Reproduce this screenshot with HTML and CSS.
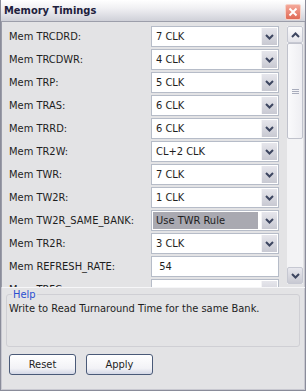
FILE: index.html
```html
<!DOCTYPE html>
<html lang="en">
<head>
    <meta charset="UTF-8">
    <title>Memory Timings</title>
    <link rel="stylesheet" href="styles.css">
</head>
<body>
    <div class="window">
        <div class="titlebar">
            <span class="title">Memory Timings</span>
            <span class="close">
                <svg width="10" height="10" viewBox="0 0 10 10"><path d="M1.5 1.5 L8.5 8.5 M8.5 1.5 L1.5 8.5" stroke="#fff" stroke-width="2"/></svg>
            </span>
        </div>

        <div class="scroller">
            <div class="rows">
                <div class="row"><label>Mem TRCDRD:</label><div class="combo"><span class="value">7 CLK</span><span class="arrow"><svg width="9" height="6" viewBox="0 0 9 6"><path d="M1 1 L4.5 4.5 L8 1" fill="none" stroke="#3d4660" stroke-width="2"/></svg></span></div></div>
                <div class="row"><label>Mem TRCDWR:</label><div class="combo"><span class="value">4 CLK</span><span class="arrow"><svg width="9" height="6" viewBox="0 0 9 6"><path d="M1 1 L4.5 4.5 L8 1" fill="none" stroke="#3d4660" stroke-width="2"/></svg></span></div></div>
                <div class="row"><label>Mem TRP:</label><div class="combo"><span class="value">5 CLK</span><span class="arrow"><svg width="9" height="6" viewBox="0 0 9 6"><path d="M1 1 L4.5 4.5 L8 1" fill="none" stroke="#3d4660" stroke-width="2"/></svg></span></div></div>
                <div class="row"><label>Mem TRAS:</label><div class="combo"><span class="value">6 CLK</span><span class="arrow"><svg width="9" height="6" viewBox="0 0 9 6"><path d="M1 1 L4.5 4.5 L8 1" fill="none" stroke="#3d4660" stroke-width="2"/></svg></span></div></div>
                <div class="row"><label>Mem TRRD:</label><div class="combo"><span class="value">6 CLK</span><span class="arrow"><svg width="9" height="6" viewBox="0 0 9 6"><path d="M1 1 L4.5 4.5 L8 1" fill="none" stroke="#3d4660" stroke-width="2"/></svg></span></div></div>
                <div class="row"><label>Mem TR2W:</label><div class="combo"><span class="value">CL+2 CLK</span><span class="arrow"><svg width="9" height="6" viewBox="0 0 9 6"><path d="M1 1 L4.5 4.5 L8 1" fill="none" stroke="#3d4660" stroke-width="2"/></svg></span></div></div>
                <div class="row"><label>Mem TWR:</label><div class="combo"><span class="value">7 CLK</span><span class="arrow"><svg width="9" height="6" viewBox="0 0 9 6"><path d="M1 1 L4.5 4.5 L8 1" fill="none" stroke="#3d4660" stroke-width="2"/></svg></span></div></div>
                <div class="row"><label>Mem TW2R:</label><div class="combo"><span class="value">1 CLK</span><span class="arrow"><svg width="9" height="6" viewBox="0 0 9 6"><path d="M1 1 L4.5 4.5 L8 1" fill="none" stroke="#3d4660" stroke-width="2"/></svg></span></div></div>
                <div class="row"><label>Mem TW2R_SAME_BANK:</label><div class="combo"><span class="value selected">Use TWR Rule</span><span class="arrow"><svg width="9" height="6" viewBox="0 0 9 6"><path d="M1 1 L4.5 4.5 L8 1" fill="none" stroke="#3d4660" stroke-width="2"/></svg></span></div></div>
                <div class="row"><label>Mem TR2R:</label><div class="combo"><span class="value">3 CLK</span><span class="arrow"><svg width="9" height="6" viewBox="0 0 9 6"><path d="M1 1 L4.5 4.5 L8 1" fill="none" stroke="#3d4660" stroke-width="2"/></svg></span></div></div>
                <div class="row"><label>Mem REFRESH_RATE:</label><div class="combo text"><span class="value">&nbsp;54</span></div></div>
                <div class="row"><label>Mem TRFC:</label><div class="combo"><span class="value">&nbsp;</span><span class="arrow"></span></div></div>
            </div>

            <div class="scrollbar">
                <span class="sb-btn"><svg width="9" height="6" viewBox="0 0 9 6"><path d="M1 5 L4.5 1.5 L8 5" fill="none" stroke="#3d4660" stroke-width="2"/></svg></span>
                <div class="track">
                    <div class="thumb">
                        <svg width="7" height="7" viewBox="0 0 7 7"><path d="M0 1.5 H7 M0 3.5 H7 M0 5.5 H7" stroke="#a8acbc" stroke-width="1"/></svg>
                    </div>
                </div>
                <span class="sb-btn down"><svg width="9" height="6" viewBox="0 0 9 6"><path d="M1 1 L4.5 4.5 L8 1" fill="none" stroke="#3d4660" stroke-width="2"/></svg></span>
            </div>
        </div>

        <fieldset class="help">
            <legend>Help</legend>
            <p>Write to Read Turnaround Time for the same Bank.</p>
        </fieldset>

        <div class="buttons">
            <button>Reset</button>
            <button>Apply</button>
        </div>
    </div>
</body>
</html>
```

FILE: styles.css
```css
body {
    margin: 0;
    font-family: "DejaVu Sans Condensed", "DejaVu Sans", sans-serif;
    font-stretch: condensed;
    font-size: 11px;
    color: #1e1e1e;
}

.window {
    width: 306px;
    height: 391px;
    box-sizing: border-box;
    background-color: #e3e3e5;
    border: 1px solid #8a8c9a;
    border-top: none;
    box-shadow: inset 1px 0 0 #c8c8d0, inset -1px 0 0 #c8c8d0, inset 0 -1px 0 #c8c8d0;
    overflow: hidden;
}

.titlebar {
    height: 21px;
    display: flex;
    align-items: center;
    justify-content: space-between;
    padding: 0 4px 0 3px;
    background: linear-gradient(#ffffff, #f0f0f3 40%, #cfd0d8);
    border-bottom: 1px solid #9c9eaa;
}

.title {
    font-weight: bold;
    color: #20203c;
}

.close {
    width: 14px;
    height: 14px;
    display: flex;
    align-items: center;
    justify-content: center;
    background: linear-gradient(#f4a89a, #e06a56);
    border: 1px solid #f7d2c8;
    border-radius: 2px;
    margin-top: 2px;
}

.scroller {
    display: flex;
    height: 265px;
    border-left: 1px solid #9a9ca8;
    border-bottom: 1px solid #f6f6f8;
    overflow: hidden;
}

.rows {
    flex: 1;
    padding: 4px 0 0 7px;
}

.row {
    display: flex;
    align-items: center;
    height: 21px;
    margin-bottom: 2px;
}

.row label {
    width: 142px;
}

.combo {
    width: 126px;
    height: 19px;
    display: flex;
    align-items: center;
    background-color: #fff;
    border: 1px solid #b6bcc8;
}

.combo .value {
    flex: 1;
    height: 17px;
    line-height: 17px;
    padding-left: 3px;
    margin-left: 1px;
}

.combo .value.selected {
    background-color: #a9a9b1;
    margin-right: 3px;
}

.arrow {
    width: 15px;
    height: 17px;
    display: flex;
    align-items: center;
    justify-content: center;
    background: linear-gradient(#e6e6ec, #c8c9d2);
    border-left: 1px solid #f4f4f6;
    margin-right: 1px;
}

.scrollbar {
    width: 16px;
    margin: 4px 2px 0 3px;
    height: 258px;
    display: flex;
    flex-direction: column;
    background-color: #f3f3f5;
}

.sb-btn {
    height: 15px;
    display: flex;
    align-items: center;
    justify-content: center;
    background: linear-gradient(#fbfbfc, #e4e4ea);
    border: 1px solid #c6c8d2;
    border-radius: 2px;
}

.sb-btn.down {
    background: linear-gradient(#e8e8ee, #c8c9d2);
}

.track {
    flex: 1;
}

.thumb {
    height: 96px;
    display: flex;
    align-items: center;
    justify-content: center;
    background: linear-gradient(90deg, #fafafc, #eeeef2);
    border: 1px solid #c0c2cc;
    border-radius: 2px;
    box-sizing: border-box;
}

.help {
    margin: 0 5px;
    padding: 0 2px 31px;
    border: 1px solid #cfcfd4;
    border-radius: 3px;
    min-width: 0;
}

.help legend {
    color: #2a4fd0;
    padding: 0 1px;
    margin-left: 3px;
    line-height: 13px;
}

.help p {
    margin: 1px 0 0;
    line-height: 13px;
}

.buttons {
    display: flex;
    gap: 10px;
    padding: 7px 0 0 8px;
}

button {
    width: 67px;
    height: 21px;
    font-family: inherit;
    font-stretch: condensed;
    font-size: 11px;
    color: #1e1e1e;
    background: linear-gradient(#ffffff, #f2f2f6 70%, #d4d8e6);
    border: 1px solid #4a5a78;
    border-radius: 3px;
    padding: 0;
}
```
